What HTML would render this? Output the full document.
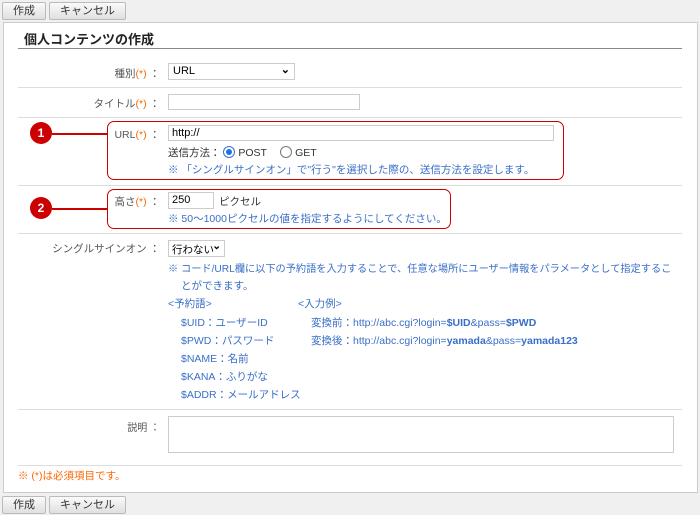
<!DOCTYPE html><html><head><meta charset="utf-8"><style>
body{margin:0;width:700px;height:515px;background:#f0f0f0;font-family:"Liberation Sans","Noto Sans CJK JP",sans-serif;font-size:10.5px;color:#333;position:relative;overflow:hidden}
.a{position:absolute;white-space:nowrap}
.btn{position:absolute;height:16px;border:1px solid #bbb;background:linear-gradient(#fafafa,#e0e0e0);border-radius:2px;font-size:11px;line-height:16px;text-align:center;color:#333}
.hr{position:absolute;left:18px;width:664px;height:1px;background:#ddd}
.lbl{position:absolute;right:540px;white-space:nowrap;text-align:right;color:#555}
.r{color:#f60}
.b{color:#3a6fc8}
.in{position:absolute;border:1px solid #ccc;background:#fff;height:15px;box-sizing:border-box}
.rb{position:absolute;border:1.5px solid #c00;border-radius:7px}
.c{position:absolute;width:22px;height:22px;border-radius:50%;background:#c00;color:#fff;font-size:12px;font-weight:bold;text-align:center;line-height:22px}
.ln{position:absolute;height:1.5px;background:#c00}
</style></head><body>
<div class="btn" style="left:2px;top:2px;width:42px">作成</div>
<div class="btn" style="left:49px;top:2px;width:75px">キャンセル</div>
<div style="position:absolute;left:3px;top:22px;width:693px;height:469px;background:#fff;border:1px solid #ccc"></div>
<div class="a" style="left:24px;top:29px;font-size:13px;font-weight:bold;color:#222">個人コンテンツの作成</div>
<div style="position:absolute;left:18px;top:48px;width:664px;height:1px;background:#888"></div>

<div class="lbl" style="top:66px">種別<span class="r">(*)</span> ：</div>
<div class="in" style="left:168px;top:63px;width:127px;height:17px;font-size:11px;padding:1px 4px;color:#000">URL<span style="position:absolute;right:4px;top:-1px;font-weight:bold">⌄</span></div>
<div class="hr" style="top:87px"></div>
<div class="lbl" style="top:96px">タイトル<span class="r">(*)</span> ：</div>
<div class="in" style="left:168px;top:94px;width:192px;height:16px"></div>
<div class="hr" style="top:117px"></div>

<div class="rb" style="left:107px;top:121px;width:455px;height:57px"></div>
<div class="c" style="left:30px;top:122px">1</div>
<div class="ln" style="left:52px;top:133px;width:55px"></div>
<div class="lbl" style="top:127px">URL<span class="r">(*)</span> ：</div>
<div class="in" style="left:168px;top:125px;width:386px;height:16px;padding:1px 3px;color:#000;font-size:11px">http://</div>
<div class="a" style="left:168px;top:145px">送信方法： <span style="display:inline-block;width:10px;height:10px;border:1px solid #3a6fc8;border-radius:50%;vertical-align:-2px;position:relative"><span style="position:absolute;left:2px;top:2px;width:6px;height:6px;border-radius:50%;background:#1a73e8"></span></span> POST　 <span style="display:inline-block;width:10px;height:10px;border:1px solid #777;border-radius:50%;vertical-align:-2px"></span> GET</div>
<div class="a b" style="left:168px;top:162px">※ 「シングルサインオン」で"行う"を選択した際の、送信方法を設定します。</div>
<div class="hr" style="top:185px"></div>

<div class="rb" style="left:107px;top:189px;width:342px;height:38px"></div>
<div class="c" style="left:30px;top:197px">2</div>
<div class="ln" style="left:52px;top:208px;width:55px"></div>
<div class="lbl" style="top:194px">高さ<span class="r">(*)</span> ：</div>
<div class="in" style="left:168px;top:192px;width:46px;height:17px;padding:1px 3px;color:#000;font-size:11px">250</div>
<div class="a" style="left:219px;top:194px">ピクセル</div>
<div class="a b" style="left:168px;top:211px">※ 50～1000ピクセルの値を指定するようにしてください。</div>
<div class="hr" style="top:233px"></div>

<div class="lbl" style="top:241px">シングルサインオン ：</div>
<div class="in" style="left:168px;top:240px;width:57px;height:17px;padding:1px 3px;color:#000">行わない<span style="position:absolute;right:3px;top:-1px;font-weight:bold">⌄</span></div>
<div class="a b" style="left:168px;top:260px;font-size:10.2px">※ コード/URL欄に以下の予約語を入力することで、任意な場所にユーザー情報をパラメータとして指定するこ</div>
<div class="a b" style="left:181px;top:278px">とができます。</div>
<div class="a b" style="left:168px;top:296px">&lt;予約語&gt;</div>
<div class="a b" style="left:298px;top:296px">&lt;入力例&gt;</div>
<div class="a b" style="left:181px;top:315px">$UID：ユーザーID</div>
<div class="a b" style="left:181px;top:333px">$PWD：パスワード</div>
<div class="a b" style="left:181px;top:351px">$NAME：名前</div>
<div class="a b" style="left:181px;top:369px">$KANA：ふりがな</div>
<div class="a b" style="left:181px;top:387px">$ADDR：メールアドレス</div>
<div class="a b" style="left:311px;top:315px">変換前：http://abc.cgi?login=<b>$UID</b>&amp;pass=<b>$PWD</b></div>
<div class="a b" style="left:311px;top:333px">変換後：http://abc.cgi?login=<b>yamada</b>&amp;pass=<b>yamada123</b></div>
<div class="hr" style="top:409px"></div>

<div class="lbl" style="top:419px;font-size:10px">説明 ：</div>
<div class="in" style="left:168px;top:416px;width:506px;height:37px"></div>
<div class="hr" style="top:465px"></div>
<div class="a r" style="left:18px;top:468px">※ (*)は必須項目です。</div>

<div class="btn" style="left:2px;top:496px;width:42px">作成</div>
<div class="btn" style="left:49px;top:496px;width:75px">キャンセル</div>
</body></html>
